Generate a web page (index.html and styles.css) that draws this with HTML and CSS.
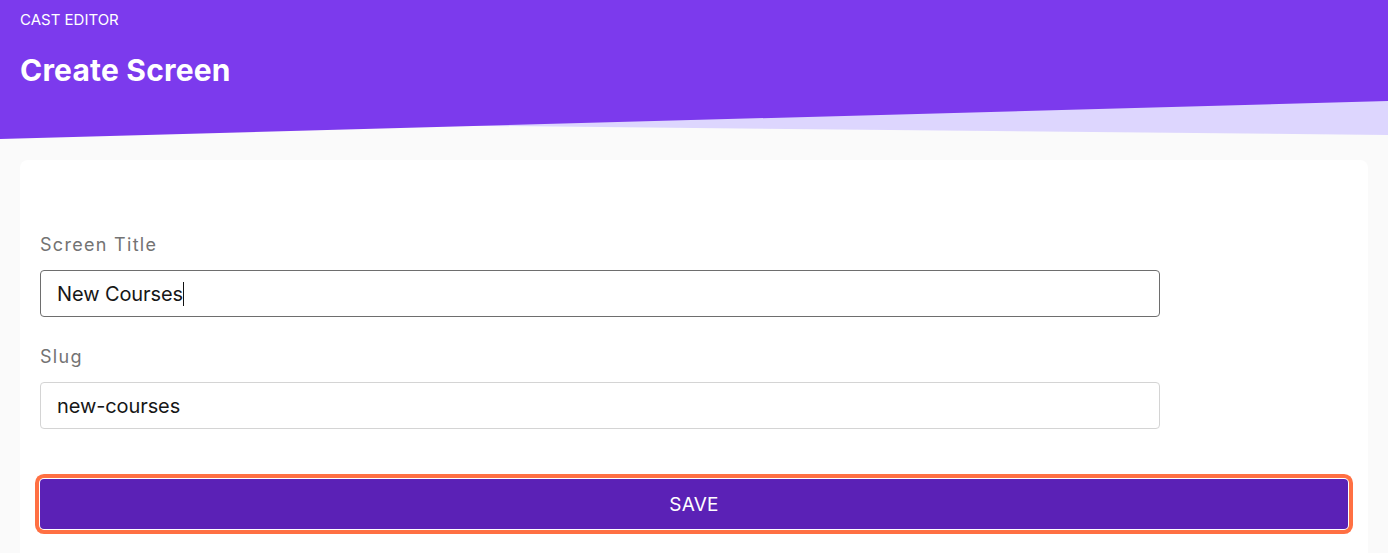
FILE: index.html
```html
<!DOCTYPE html>
<html lang="en">
<head>
<meta charset="utf-8">
<title>Create Screen</title>
<link rel="stylesheet" href="styles.css">
</head>
<body>
<header class="hero">
  <div class="eyebrow">CAST EDITOR</div>
  <h1 class="title">Create Screen</h1>
</header>
<main class="main">
  <section class="card">
    <form class="form">
      <div class="field">
        <label class="label" for="title">Screen Title</label>
        <div class="input input-focus"><span class="value">New Courses</span><span class="caret"></span></div>
      </div>
      <div class="field">
        <label class="label" for="slug">Slug</label>
        <div class="input"><span class="value">new-courses</span></div>
      </div>
      <button type="button" class="save">SAVE</button>
    </form>
  </section>
</main>
</body>
</html>
```
FILE: styles.css
```css
* { box-sizing: border-box; }
html, body { margin: 0; padding: 0; }
body {
  background: #fafafa;
  font-family: Inter, "Noto Sans", sans-serif;
  overflow: hidden;
}
.hero {
  position: relative;
  height: 140px;
  padding: 10px 20px 0;
  color: #fff;
  isolation: isolate;
}
.hero::before {
  content: "";
  position: absolute;
  inset: 0;
  background: #ddd6fe;
  clip-path: polygon(0 0, 100% 0, 100% 135px, 0 121px);
  z-index: -2;
}
.hero::after {
  content: "";
  position: absolute;
  inset: 0;
  background: #7c3aed;
  clip-path: polygon(0 0, 100% 0, 100% 101px, 0 139px);
  z-index: -1;
}
.eyebrow {
  font-size: 15px;
  line-height: 20px;
}
.title {
  margin: 22px 0 0;
  font-size: 30px;
  line-height: 36px;
  font-weight: 700;
  letter-spacing: 0.2px;
}
.main {
  padding: 20px 20px 0;
}
.card {
  background: #fff;
  border-radius: 8px;
  padding: 71px 20px 40px;
  min-height: 420px;
}
.form {
  display: flex;
  flex-direction: column;
}
.field {
  display: flex;
  flex-direction: column;
  gap: 12px;
  margin-bottom: 26px;
}
.label {
  font-size: 18px;
  line-height: 27px;
  color: #737373;
  letter-spacing: 1.3px;
}
.input {
  display: flex;
  align-items: center;
  width: 1120px;
  height: 47px;
  padding: 0 16px;
  border: 1px solid #d4d4d4;
  border-radius: 4px;
  font-size: 20px;
  letter-spacing: -0.1px;
  color: #171717;
  background: #fff;
}
.input-focus {
  border-color: #6e6e6e;
}
.caret {
  display: inline-block;
  width: 1px;
  height: 24px;
  background: #111;
  margin-left: 0;
}
.save {
  margin-top: 24px;
  height: 50px;
  width: 100%;
  border: none;
  border-radius: 4px;
  background: #5b21b6;
  color: #fff;
  font-family: inherit;
  font-size: 19px;
  letter-spacing: 0.2px;
  box-shadow: 0 0 0 1px #fff, 0 0 0 5px #ff7043;
}
```
